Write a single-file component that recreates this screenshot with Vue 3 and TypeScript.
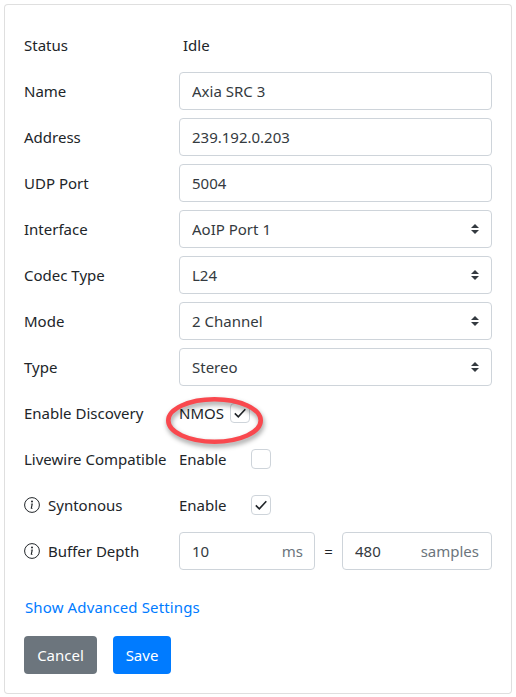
<script setup lang="ts">
import { ref } from 'vue'

interface Row { label: string; value: string }

const textRows: Row[] = [
  { label: 'Name', value: 'Axia SRC 3' },
  { label: 'Address', value: '239.192.0.203' },
  { label: 'UDP Port', value: '5004' },
]
const selectRows: Row[] = [
  { label: 'Interface', value: 'AoIP Port 1' },
  { label: 'Codec Type', value: 'L24' },
  { label: 'Mode', value: '2 Channel' },
  { label: 'Type', value: 'Stereo' },
]
const nmos = ref(true)
const livewire = ref(false)
const syntonous = ref(true)
</script>

<template>
  <form class="card" @submit.prevent>
    <div class="row">
      <span class="label">Status</span>
      <span class="status">Idle</span>
    </div>
    <label v-for="r in textRows" :key="r.label" class="row">
      <span class="label">{{ r.label }}</span>
      <input class="control" type="text" :value="r.value" />
    </label>
    <label v-for="r in selectRows" :key="r.label" class="row">
      <span class="label">{{ r.label }}</span>
      <select class="control select">
        <option>{{ r.value }}</option>
      </select>
    </label>
    <div class="row">
      <span class="label">Enable Discovery</span>
      <div class="value nmos">
        <span class="nmos-text">NMOS</span>
        <button type="button" class="check" @click="nmos = !nmos">
          <svg v-if="nmos" viewBox="0 0 20 20" width="20" height="20"><path d="M4.8 10.4l3.5 3.5 7-7.6" fill="none" stroke="#212529" stroke-width="1.6" /></svg>
        </button>
        <svg class="ring" viewBox="0 0 106 58" width="106" height="58">
          <ellipse cx="52.5" cy="28.5" rx="46.2" ry="21.2" fill="none" stroke="#f9484e" stroke-width="4.6" />
        </svg>
      </div>
    </div>
    <div class="row">
      <span class="label">Livewire Compatible</span>
      <div class="value enable">
        <span>Enable</span>
        <button type="button" class="check" @click="livewire = !livewire">
          <svg v-if="livewire" viewBox="0 0 20 20" width="20" height="20"><path d="M4.8 10.4l3.5 3.5 7-7.6" fill="none" stroke="#212529" stroke-width="1.6" /></svg>
        </button>
      </div>
    </div>
    <div class="row">
      <span class="label with-icon">
        <svg class="info" viewBox="0 0 16 16" width="16" height="16"><circle cx="8" cy="8" r="7.4" fill="none" stroke="#212529" stroke-width="1" /><path d="M8.9 6.6l-2 .25-.07.33.39.07c.25.06.3.15.25.4l-.65 3.05c-.17.79.09 1.16.71 1.16.48 0 1.04-.22 1.3-.53l.07-.35c-.18.16-.45.22-.62.22-.25 0-.34-.17-.27-.47z" fill="#212529" /><circle cx="8" cy="4.5" r="1" fill="#212529" /></svg>
        Syntonous
      </span>
      <div class="value enable">
        <span>Enable</span>
        <button type="button" class="check" @click="syntonous = !syntonous">
          <svg v-if="syntonous" viewBox="0 0 20 20" width="20" height="20"><path d="M4.8 10.4l3.5 3.5 7-7.6" fill="none" stroke="#212529" stroke-width="1.6" /></svg>
        </button>
      </div>
    </div>
    <div class="row">
      <span class="label with-icon">
        <svg class="info" viewBox="0 0 16 16" width="16" height="16"><circle cx="8" cy="8" r="7.4" fill="none" stroke="#212529" stroke-width="1" /><path d="M8.9 6.6l-2 .25-.07.33.39.07c.25.06.3.15.25.4l-.65 3.05c-.17.79.09 1.16.71 1.16.48 0 1.04-.22 1.3-.53l.07-.35c-.18.16-.45.22-.62.22-.25 0-.34-.17-.27-.47z" fill="#212529" /><circle cx="8" cy="4.5" r="1" fill="#212529" /></svg>
        Buffer Depth
      </span>
      <div class="value buffer">
        <div class="unit-box ms"><span>10</span><span class="unit">ms</span></div>
        <span class="eq">=</span>
        <div class="unit-box samples"><span>480</span><span class="unit">samples</span></div>
      </div>
    </div>
    <a class="link" href="#" @click.prevent>Show Advanced Settings</a>
    <div class="actions">
      <button type="button" class="btn cancel">Cancel</button>
      <button type="submit" class="btn save">Save</button>
    </div>
  </form>
</template>

<style>
body { background: #fff; }
</style>

<style scoped>
.card {
  box-sizing: border-box;
  width: 508px;
  height: 690px;
  margin: 4px;
  padding: 21px 19px 19px;
  border: 1px solid rgba(0, 0, 0, .125);
  border-radius: 4px;
  display: flex;
  flex-direction: column;
  gap: 8px;
  font: 15px/24px "Noto Sans", sans-serif;
  color: #212529;
  background: #fff;
}
.row {
  display: flex;
  align-items: center;
  height: 38px;
}
.label {
  flex: 0 0 155px;
  white-space: nowrap;
}
.with-icon {
  display: flex;
  align-items: center;
  gap: 8px;
}
.status { padding-left: 4px; }
.control {
  box-sizing: border-box;
  flex: 1;
  min-width: 0;
  height: 38px;
  padding: 0 12px;
  border: 1px solid #ced4da;
  border-radius: 4px;
  background: #fff;
  font: inherit;
  color: #343a40;
  outline: none;
}
.select {
  appearance: none;
  background: #fff url("data:image/svg+xml,%3csvg xmlns='http://www.w3.org/2000/svg' width='4' height='5' viewBox='0 0 4 5'%3e%3cpath fill='%23343a40' d='M2 0L0 2h4zm0 5L0 3h4z'/%3e%3c/svg%3e") no-repeat right 12px center / 8px 10px;
}
.value {
  flex: 1;
  display: flex;
  align-items: center;
  min-width: 0;
}
.nmos { position: relative; gap: 4px; }
.nmos-text { width: 47px; }
.enable span { width: 72px; }
.check {
  box-sizing: border-box;
  width: 20px;
  height: 20px;
  padding: 0;
  border: 1px solid #ced4da;
  border-radius: 4px;
  background: #fff;
  display: block;
}
.check svg { display: block; margin: -1px; }
.ring {
  position: absolute;
  left: -17px;
  top: -9px;
  pointer-events: none;
  filter: drop-shadow(1px 3px 2.5px rgba(0, 0, 0, .4));
}
.info { flex: none; }
.buffer { gap: 0; }
.unit-box {
  box-sizing: border-box;
  height: 38px;
  padding: 0 12px;
  border: 1px solid #ced4da;
  border-radius: 4px;
  display: flex;
  justify-content: space-between;
  align-items: center;
  color: #343a40;
}
.ms { width: 136px; padding-right: 11px; }
.samples { width: 150px; }
.unit { color: #6c757d; }
.eq { width: 27px; text-align: center; }
.link {
  margin-top: 17px;
  margin-left: 1px;
  color: #007bff;
  text-decoration: none;
  line-height: 24px;
  letter-spacing: .13px;
}
.actions {
  margin-top: 9px;
  display: flex;
  gap: 16px;
}
.btn {
  box-sizing: border-box;
  height: 38px;
  border: 1px solid transparent;
  border-radius: 4px;
  color: #fff;
  font: inherit;
  padding: 0;
}
.cancel { width: 73px; background: #6c757d; }
.save { width: 58px; background: #007bff; }
</style>
